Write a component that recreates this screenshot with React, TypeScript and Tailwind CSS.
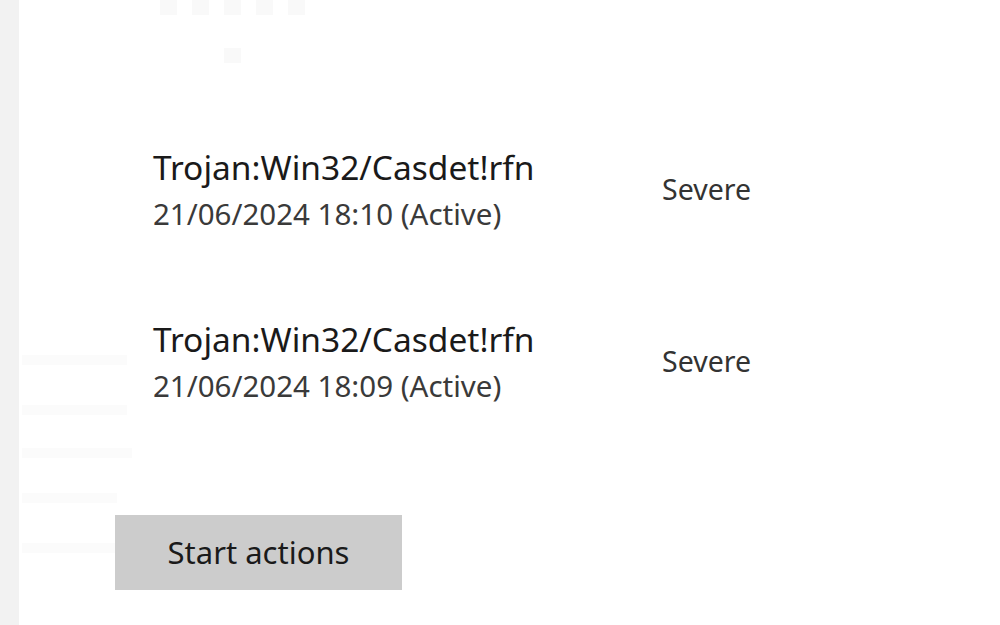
import React from "react";

interface Threat {
  name: string;
  detected: string;
  level: string;
}

const threats: Threat[] = [
  { name: "Trojan:Win32/Casdet!rfn", detected: "21/06/2024 18:10 (Active)", level: "Severe" },
  { name: "Trojan:Win32/Casdet!rfn", detected: "21/06/2024 18:09 (Active)", level: "Severe" },
];

// faint leftovers of the page behind, barely visible
const ghostBars = [
  { w: "w-[105px]", mt: "mt-[355px]" },
  { w: "w-[105px]", mt: "mt-[40px]" },
  { w: "w-[110px]", mt: "mt-[33px]" },
  { w: "w-[95px]", mt: "mt-[35px]" },
  { w: "w-[100px]", mt: "mt-[40px]" },
];

const ThreatRow = ({ threat }: { threat: Threat }) => (
  <div className="flex items-center h-[172px]">
    <div className="w-[509px] flex flex-col">
      <div className="text-[33.5px] leading-[40px] text-[#1a1a1a] whitespace-nowrap">{threat.name}</div>
      <div className="text-[29.5px] leading-[36px] text-[#3a3a3a] mt-[9px] whitespace-nowrap">{threat.detected}</div>
    </div>
    <div className="text-[28.5px] leading-[36px] text-[#333333]">{threat.level}</div>
  </div>
);

export default function App() {
  return (
    <div
      className="flex w-[1000px] h-[625px] overflow-hidden bg-white"
      style={{ fontFamily: '"Noto Sans", "Open Sans", sans-serif' }}
    >
      <div className="w-[19px] shrink-0 bg-[#f2f2f2]" />
      <div className="flex shrink-0">
        <div className="w-[134px] shrink-0 flex flex-col pl-[3px]">
          {ghostBars.map((b, i) => (
            <div key={i} className={`${b.w} ${b.mt} h-[10px] bg-[#fbfbfb]`} />
          ))}
        </div>
        <div className="flex flex-col">
          <div className="flex gap-[15px] pl-[7px]">
            {[0, 1, 2, 3, 4].map((i) => (
              <div key={i} className="w-[17px] h-[15px] bg-[#f9f9f9]" />
            ))}
          </div>
          <div className="w-[17px] h-[15px] bg-[#f9f9f9] ml-[71px] mt-[33px]" />
          <div className="mt-[40px] flex flex-col">
            {threats.map((t, i) => (
              <ThreatRow key={i} threat={t} />
            ))}
          </div>
          <button
            type="button"
            className="-ml-[38px] mt-[68px] w-[287px] h-[75px] bg-[#cccccc] text-[31px] text-[#1a1a1a]"
          >
            Start actions
          </button>
        </div>
      </div>
    </div>
  );
}
